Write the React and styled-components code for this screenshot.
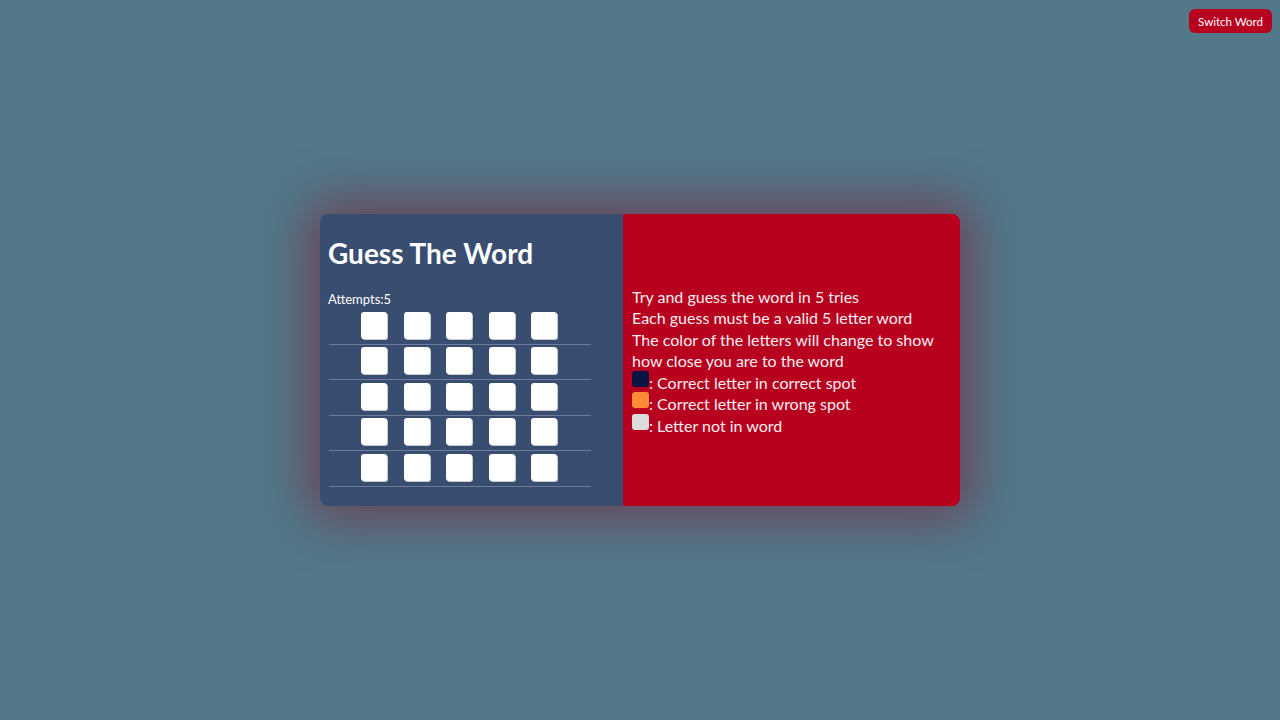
import React from "react";
import styled, { createGlobalStyle } from "styled-components";

const Global = createGlobalStyle`
  html, body { margin: 0; padding: 0; }
  body {
    background: #527889;
    font-family: Lato, "Open Sans", sans-serif;
    width: 1280px;
    height: 720px;
    overflow: hidden;
  }
`;

const Page = styled.div`
  position: relative;
  width: 1280px;
  height: 720px;
  display: flex;
  align-items: center;
  justify-content: center;
`;

const SwitchButton = styled.button`
  position: absolute;
  top: 9px;
  right: 8px;
  width: 83px;
  height: 24px;
  padding: 0;
  border: none;
  border-radius: 6px;
  background: #b8001f;
  color: #fff;
  font-family: inherit;
  font-size: 11.5px;
`;

const Card = styled.div`
  display: flex;
  width: 640px;
  height: 292px;
  border-radius: 8px;
  overflow: hidden;
  box-shadow: 0 0 50px 12px rgba(125, 30, 55, 0.6);
`;

const LeftPanel = styled.div`
  width: 303px;
  background: #384d70;
  padding: 8px;
  box-sizing: border-box;
  color: #fff;
`;

const Title = styled.h1`
  margin: 13px 0 20px;
  font-size: 28px;
  font-weight: 700;
  line-height: 36px;
`;

const Attempts = styled.div`
  font-size: 13px;
  line-height: 16px;
  margin-bottom: 2px;
`;

const Grid = styled.div`
  width: 262px;
  margin-left: 1px;
`;

const Row = styled.div`
  display: flex;
  justify-content: center;
  gap: 16.5px;
  padding: 2.5px 2px 5px 0;
  border-bottom: 1px solid #6a7e9c;
`;

const Tile = styled.div`
  width: 26px;
  height: 27px;
  background: #fff;
  border-radius: 3px;
  box-shadow: 1px 1px 0 #c9ccd3;
`;

const RightPanel = styled.div`
  flex: 1;
  background: #b8001f;
  display: flex;
  flex-direction: column;
  justify-content: center;
  padding: 2px 8px 0 9px;
  color: #f6eef0;
  font-size: 16px;
  line-height: 21.4px;
`;

const Line = styled.div`
  white-space: nowrap;
`;

const LegendLine = styled.div`
  display: flex;
  align-items: flex-start;
  white-space: nowrap;
`;

const Swatch = styled.span`
  display: inline-block;
  flex: none;
  width: 17px;
  height: 16px;
  border-radius: 3px;
  background: ${(p) => p.$color};
  margin-top: -1px;
`;

export default function App() {
  const rows = [0, 1, 2, 3, 4];
  return (
    <>
      <Global />
      <Page>
        <SwitchButton>Switch Word</SwitchButton>
        <Card>
          <LeftPanel>
            <Title>Guess The Word</Title>
            <Attempts>Attempts:5</Attempts>
            <Grid>
              {rows.map((r) => (
                <Row key={r}>
                  {rows.map((c) => (
                    <Tile key={c} />
                  ))}
                </Row>
              ))}
            </Grid>
          </LeftPanel>
          <RightPanel>
            <Line>Try and guess the word in 5 tries</Line>
            <Line>Each guess must be a valid 5 letter word</Line>
            <Line>The color of the letters will change to show</Line>
            <Line>how close you are to the word</Line>
            <LegendLine>
              <Swatch $color="#0b1343" />: Correct letter in correct spot
            </LegendLine>
            <LegendLine>
              <Swatch $color="#ff8a38" />: Correct letter in wrong spot
            </LegendLine>
            <LegendLine>
              <Swatch $color="#dcdcdc" />: Letter not in word
            </LegendLine>
          </RightPanel>
        </Card>
      </Page>
    </>
  );
}
